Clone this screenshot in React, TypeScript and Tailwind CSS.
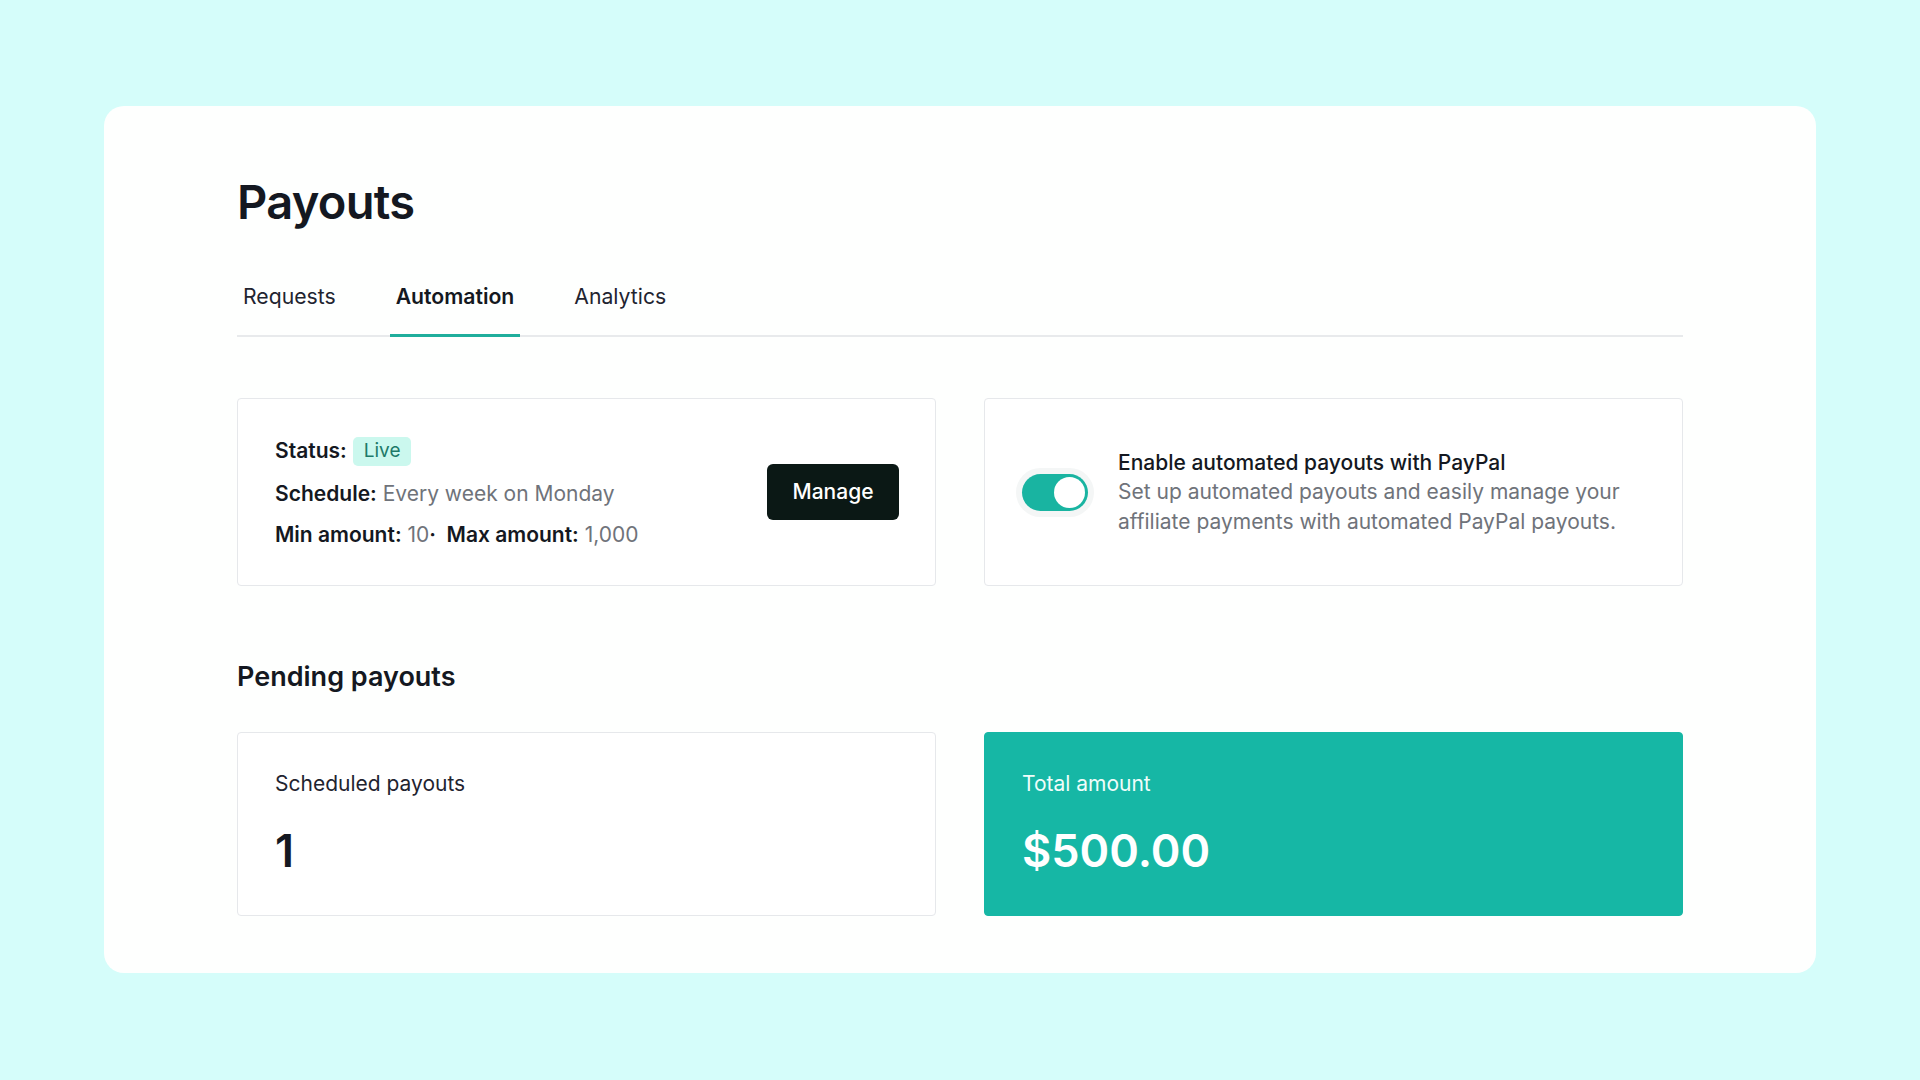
import React from "react";

export default function App() {
  const font = { fontFamily: "Inter, 'Noto Sans', sans-serif" };
  return (
    <div className="min-h-screen w-full bg-[#d5fdfa] px-[104px] pt-[106px] pb-[107px]" style={font}>
      <div className="w-full rounded-[20px] bg-[#fefffe] px-[133px] pt-[72px] pb-[57px]">
        <h1 className="text-[47px] leading-[47px] font-semibold text-[#141821] tracking-[-0.7px]">Payouts</h1>

        <div className="mt-[56px] flex gap-[48px] border-b-2 border-[#e8eaec]">
          <div className="-mb-[2px] border-b-[3px] border-transparent px-[6px] pb-[22px] text-[21.2px] leading-[31px] text-[#1f2430]">
            Requests
          </div>
          <div className="-mb-[2px] border-b-[3px] border-[#1fae9c] px-[6px] pb-[22px] text-[21.2px] leading-[31px] font-semibold text-[#141821]">
            Automation
          </div>
          <div className="-mb-[2px] border-b-[3px] border-transparent px-[6px] pb-[22px] text-[21.2px] leading-[31px] text-[#1f2430]">
            Analytics
          </div>
        </div>

        <div className="mt-[61px] grid grid-cols-2 gap-[48px]">
          <div className="flex items-center justify-between rounded-[4px] border-[1.5px] border-[#e6e8eb] bg-white py-[35px] pl-[37px] pr-[36px]">
            <div className="mt-[2px] flex flex-col text-[21px] leading-[30px] text-[#141821]">
              <div className="flex h-[30px] items-center gap-[6px]">
                <span className="font-semibold">Status:</span>
                <span className="flex h-[29px] items-center rounded-[5px] bg-[#cbf8ee] px-[11px] text-[19px] text-[#1d7a69]">Live</span>
              </div>
              <div className="mt-[13px]">
                <span className="font-semibold">Schedule:</span>{" "}
                <span className="text-[#6f737a]">Every week on Monday</span>
              </div>
              <div className="mt-[11px]">
                <span className="font-semibold">Min amount:</span>{" "}
                <span className="text-[#6f737a]">10</span>
                <span className="font-semibold">·&nbsp; </span>
                <span className="font-semibold">Max amount:</span>{" "}
                <span className="text-[#6f737a]">1,000</span>
              </div>
            </div>
            <button className="h-[56px] w-[132px] rounded-[6px] bg-[#0b1815] text-[21px] font-medium text-white">
              Manage
            </button>
          </div>

          <div className="flex items-center gap-[30px] rounded-[4px] border-[1.5px] border-[#e6e8eb] bg-white py-[36px] pl-[37px] pr-[36px]">
            <div className="flex h-[37px] w-[66px] shrink-0 items-center justify-end rounded-full bg-[#19b4a1] pr-[3px] shadow-[0_0_0_6px_#f4f6f6]">
              <div className="h-[31px] w-[31px] rounded-full bg-white" />
            </div>
            <div className="flex max-w-[535px] flex-col text-[21px] leading-[29.5px]">
              <div className="font-medium text-[#141821]">Enable automated payouts with PayPal</div>
              <div className="text-[#6f737a]">
                Set up automated payouts and easily manage your affiliate payments with automated PayPal payouts.
              </div>
            </div>
          </div>
        </div>

        <h2 className="mt-[74px] text-[27px] leading-[34px] font-semibold text-[#141821]">Pending payouts</h2>

        <div className="mt-[38px] grid grid-cols-2 gap-[48px]">
          <div className="flex flex-col rounded-[4px] border-[1.5px] border-[#e6e8eb] bg-white pl-[37px] pt-[36px] pb-[42px]">
            <div className="text-[21px] leading-[30px] text-[#1f2430]">Scheduled payouts</div>
            <div className="mt-[29px] text-[45px] leading-[45px] font-semibold text-[#141821]">1</div>
          </div>
          <div className="flex flex-col rounded-[4px] border-[1.5px] border-[#16b7a5] bg-[#16b7a5] pl-[37px] pt-[36px] pb-[42px]">
            <div className="text-[21px] leading-[30px] text-[#effdfa]">Total amount</div>
            <div className="mt-[29px] text-[45px] leading-[45px] font-semibold text-white">$500.00</div>
          </div>
        </div>
      </div>
    </div>
  );
}
